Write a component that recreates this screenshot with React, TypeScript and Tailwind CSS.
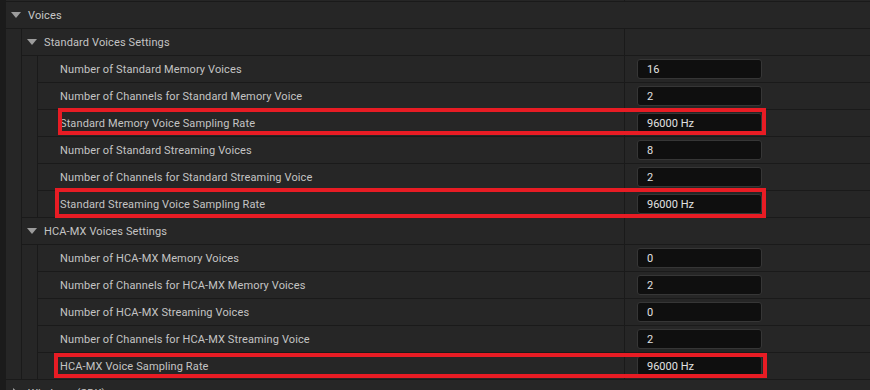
import React from "react";

function TriDown() {
  return (
    <svg width="10" height="6" viewBox="0 0 10 6" className="shrink-0">
      <path d="M0 0 H10 L5 6 Z" fill="#9c9c9c" />
    </svg>
  );
}

function TriRight() {
  return (
    <svg width="6" height="10" viewBox="0 0 6 10" className="shrink-0">
      <path d="M0 0 L6 5 L0 10 Z" fill="#9c9c9c" />
    </svg>
  );
}

function Leaf({ label, value }: { label: string; value: string }) {
  return (
    <div className="flex h-[26px] gap-px bg-[#1a1a1a]">
      <div className="flex flex-1 items-center bg-[#262626] pl-[22px] tracking-[0.12px] text-[#c4c4c4] whitespace-nowrap">
        {label}
      </div>
      <div className="flex w-[245px] items-center bg-[#262626] pl-[12px]">
        <div className="flex h-[20px] w-[125px] items-center rounded-[3px] border border-[#363636] bg-[#0f0f0f] pl-[9px] text-[#e2e2e2]">
          {value}
        </div>
      </div>
    </div>
  );
}

function SubHeader({ label }: { label: string }) {
  return (
    <div className="flex h-[26px] gap-px bg-[#1a1a1a]">
      <div className="flex flex-1 items-center gap-[7px] bg-[#262626] pl-[5px] tracking-[0.12px] text-[#c4c4c4]">
        <TriDown />
        <span>{label}</span>
      </div>
      <div className="w-[245px] bg-[#262626]" />
    </div>
  );
}

function Indent({ children }: { children: React.ReactNode }) {
  return (
    <div className="flex gap-px bg-[#1a1a1a]">
      <div className="w-[15px] shrink-0 bg-[#262626]" />
      <div className="flex flex-1 flex-col gap-px">{children}</div>
    </div>
  );
}

const standard: [string, string][] = [
  ["Number of Standard Memory Voices", "16"],
  ["Number of Channels for Standard Memory Voice", "2"],
  ["Standard Memory Voice Sampling Rate", "96000 Hz"],
  ["Number of Standard Streaming Voices", "8"],
  ["Number of Channels for Standard Streaming Voice", "2"],
  ["Standard Streaming Voice Sampling Rate", "96000 Hz"],
];

const hcamx: [string, string][] = [
  ["Number of HCA-MX Memory Voices", "0"],
  ["Number of Channels for HCA-MX Memory Voices", "2"],
  ["Number of HCA-MX Streaming Voices", "0"],
  ["Number of Channels for HCA-MX Streaming Voice", "2"],
  ["HCA-MX Voice Sampling Rate", "96000 Hz"],
];

export default function App() {
  return (
    <div
      className="relative h-[390px] w-[870px] overflow-hidden bg-[#1b1b1b] pl-[6px] text-[11px] leading-none"
      style={{ fontFamily: "Roboto, 'Noto Sans', sans-serif" }}
    >
      <div className="flex flex-col gap-px bg-[#1a1a1a]">
        <div className="flex h-px gap-px bg-[#1a1a1a]">
          <div className="flex-1 bg-[#262626]" />
          <div className="w-[245px] bg-[#262626]" />
        </div>
        <div className="flex h-[26px] items-center gap-[7px] bg-[#262626] pl-[5px] tracking-[0.12px] text-[#c8c8c8]">
          <TriDown />
          <span>Voices</span>
        </div>
        <Indent>
          <SubHeader label="Standard Voices Settings" />
          <Indent>
            {standard.map(([l, v]) => (
              <Leaf key={l} label={l} value={v} />
            ))}
          </Indent>
          <SubHeader label="HCA-MX Voices Settings" />
          <Indent>
            {hcamx.map(([l, v]) => (
              <Leaf key={l} label={l} value={v} />
            ))}
          </Indent>
        </Indent>
        <div className="flex h-[26px] items-center gap-[9px] bg-[#262626] pl-[7px] tracking-[0.12px] text-[#c8c8c8]">
          <TriRight />
          <span>Windows (SDK)</span>
        </div>
      </div>

      <div className="absolute left-[58px] top-[108px] h-[27px] w-[708px] border-4 border-[#e81c24]" />
      <div className="absolute left-[55px] top-[188px] h-[30px] w-[711px] border-4 border-[#e81c24]" />
      <div className="absolute left-[54px] top-[353px] h-[25px] w-[713px] border-4 border-[#e81c24]" />
    </div>
  );
}
